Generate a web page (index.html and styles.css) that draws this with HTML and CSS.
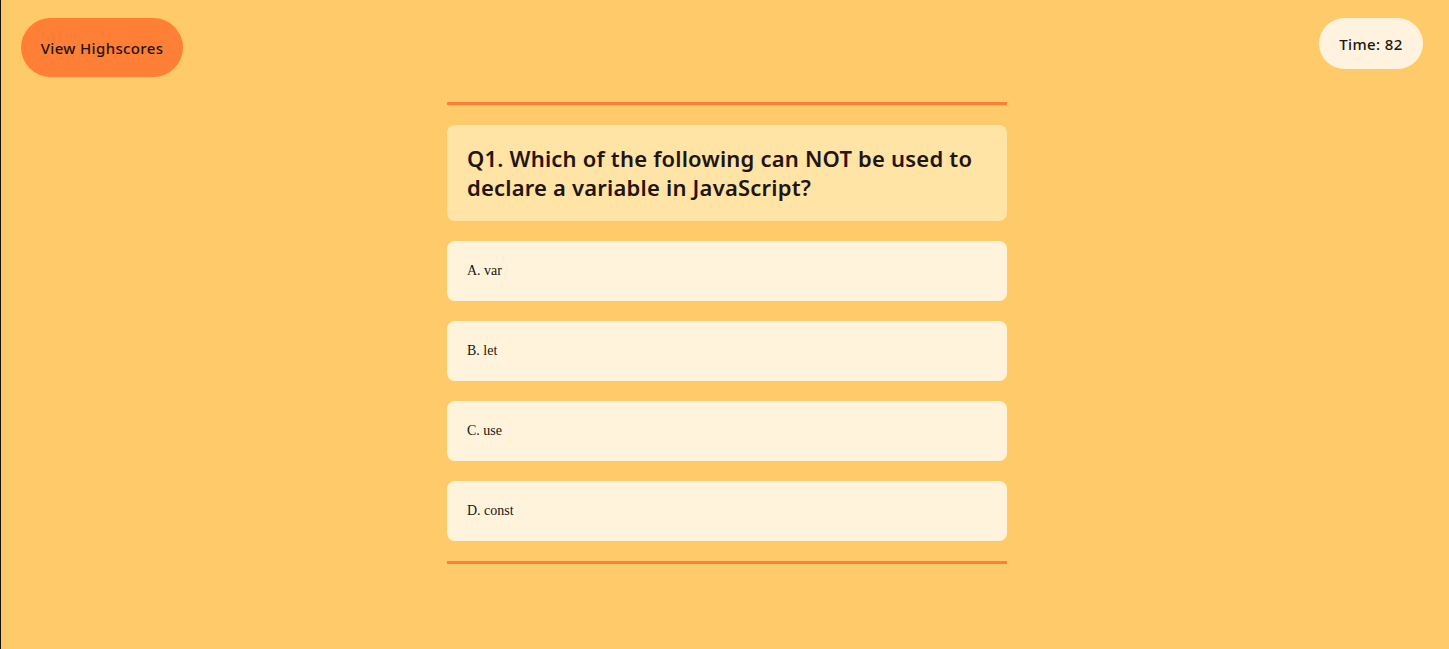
FILE: index.html
```html
<!DOCTYPE html>
<html lang="en">
<head>
<meta charset="utf-8">
<title>Code Quiz</title>
<link rel="stylesheet" href="styles.css">
</head>
<body>
<header class="topbar">
  <button class="btn-scores">View Highscores</button>
  <div class="timer">Time: 82</div>
</header>
<main class="quiz">
  <hr class="rule">
  <h2 class="question">Q1. Which of the following can NOT be used to declare a variable in JavaScript?</h2>
  <button class="answer">A. var</button>
  <button class="answer">B. let</button>
  <button class="answer">C. use</button>
  <button class="answer">D. const</button>
  <hr class="rule">
</main>
</body>
</html>
```

FILE: styles.css
```css
html, body {
  margin: 0;
  padding: 0;
  height: 100%;
}
body {
  background: #ffcb6a;
  border-left: 1px solid #1a1208;
  box-sizing: border-box;
  font-family: "Noto Sans", "Lato", sans-serif;
  color: #22140f;
}
.topbar {
  display: flex;
  justify-content: space-between;
  align-items: flex-start;
  padding: 18px 26px 0 20px;
}
.btn-scores {
  width: 162px;
  height: 59px;
  border: none;
  border-radius: 30px;
  background: #ff7f37;
  color: #22140f;
  font-family: "Noto Sans", "Lato", sans-serif;
  font-size: 15px;
  font-weight: 500;
  letter-spacing: 0.35px;
  cursor: pointer;
}
.timer {
  width: 104px;
  height: 51px;
  border-radius: 26px;
  background: #fff3df;
  display: flex;
  align-items: center;
  justify-content: center;
  font-size: 15px;
  font-weight: 500;
  letter-spacing: 0.4px;
}
.quiz {
  width: 560px;
  margin: 25px 0 0 calc(50% - 278px);
  display: flex;
  flex-direction: column;
  gap: 20px;
}
.rule {
  margin: 0;
  border: none;
  height: 3px;
  background: #ff7f37;
}
.question {
  margin: 0;
  height: 96px;
  box-sizing: border-box;
  padding: 19px 20px;
  background: #ffe4a6;
  border-radius: 8px;
  font-size: 22px;
  font-weight: 600;
  line-height: 29px;
  letter-spacing: 0.2px;
}
.answer {
  height: 60px;
  border: none;
  border-radius: 8px;
  background: #fff3dc;
  text-align: left;
  padding: 0 20px;
  font-family: "Liberation Serif", "DejaVu Serif", serif;
  font-size: 14px;
  color: #22140f;
  cursor: pointer;
}
```
